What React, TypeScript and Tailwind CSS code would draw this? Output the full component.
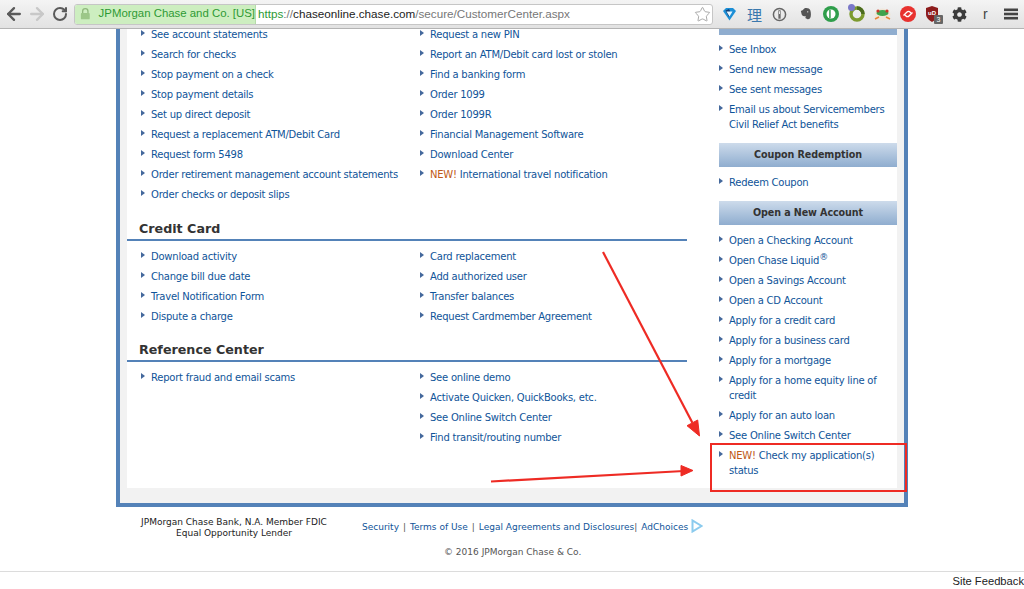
import { ArrowLeft, ArrowRight, RotateCw, Star } from "lucide-react";
import { FaCog } from "react-icons/fa";

type Item = { text: string; isNew?: boolean; sup?: boolean };

const accountLeft = [
  "See account statements",
  "Search for checks",
  "Stop payment on a check",
  "Stop payment details",
  "Set up direct deposit",
  "Request a replacement ATM/Debit Card",
  "Request form 5498",
  "Order retirement management account statements",
  "Order checks or deposit slips",
];
const accountRight: (string | Item)[] = [
  "Request a new PIN",
  "Report an ATM/Debit card lost or stolen",
  "Find a banking form",
  "Order 1099",
  "Order 1099R",
  "Financial Management Software",
  "Download Center",
  { text: "International travel notification", isNew: true },
];
const cardLeft = ["Download activity", "Change bill due date", "Travel Notification Form", "Dispute a charge"];
const cardRight = ["Card replacement", "Add authorized user", "Transfer balances", "Request Cardmember Agreement"];
const refLeft = ["Report fraud and email scams"];
const refRight = [
  "See online demo",
  "Activate Quicken, QuickBooks, etc.",
  "See Online Switch Center",
  "Find transit/routing number",
];
const inbox = ["See Inbox", "Send new message", "See sent messages", "Email us about Servicemembers Civil Relief Act benefits"];
const openAccount: (string | Item)[] = [
  "Open a Checking Account",
  { text: "Open Chase Liquid", sup: true },
  "Open a Savings Account",
  "Open a CD Account",
  "Apply for a credit card",
  "Apply for a business card",
  "Apply for a mortgage",
  "Apply for a home equity line of credit",
  "Apply for an auto loan",
  "See Online Switch Center",
  { text: "Check my application(s) status", isNew: true },
];

function LinkRow({ item }: { item: string | Item }) {
  const data = typeof item === "string" ? { text: item } : item;
  return (
    <li className="flex pb-[5px]">
      <span className="mt-[3px] mr-[6px] h-0 w-0 shrink-0 border-y-[3.5px] border-l-[4px] border-y-transparent border-l-[#44689c]" />
      <a className="text-[10px] leading-[15px] tracking-[-0.23px] text-[#0f5499]">
        {data.isNew ? <span className="text-[#bf5a16]">NEW! </span> : null}
        {data.text}
        {data.sup ? <sup className="text-[9px] leading-[0]">®</sup> : null}
      </a>
    </li>
  );
}

function LinkList({ items, className }: { items: (string | Item)[]; className?: string }) {
  return (
    <ul className={className}>
      {items.map((item) => (
        <LinkRow key={typeof item === "string" ? item : item.text} item={item} />
      ))}
    </ul>
  );
}

function Section({ title, left, right }: { title: string; left: string[]; right: string[] }) {
  return (
    <section>
      <h2 className="pl-3 text-[12.7px] leading-[20px] font-bold text-[#333]">{title}</h2>
      <div className="flex border-t-2 border-[#5482b8] pt-[8px] pl-[14px]">
        <LinkList items={left} className="w-[279px]" />
        <LinkList items={right} className="flex-1" />
      </div>
    </section>
  );
}

function SideHeader({ title }: { title: string }) {
  return (
    <h3 className="h-[24px] bg-gradient-to-b from-[#cddbeb] to-[#8fadcf] text-center text-[9.6px] leading-[24px] font-bold tracking-[-0.1px] text-[#333]">
      {title}
    </h3>
  );
}

function Toolbar() {
  return (
    <header className="relative z-10 flex h-[29px] shrink-0 items-center border-b border-[#b4b4b4] bg-gradient-to-b from-[#f4f4f4] to-[#e2e2e2] pl-[3px]">
      <span className="flex w-[22px] justify-center">
        <ArrowLeft size={20} strokeWidth={2.8} className="text-[#5a5a5a]" />
      </span>
      <span className="ml-[1px] flex w-[22px] justify-center">
        <ArrowRight size={20} strokeWidth={2.8} className="text-[#c8c8c8]" />
      </span>
      <span className="ml-[1px] flex w-[22px] justify-center">
        <RotateCw size={16} strokeWidth={3} className="text-[#5a5a5a]" />
      </span>
      <div className="ml-[3px] flex h-[21px] w-[639px] items-center rounded-[3px] border border-[#c6c6c6] bg-white font-['Liberation_Sans',sans-serif]">
        <div className="flex h-full w-[181px] items-center rounded-l-[2px] border-r border-[#b6dcaa] bg-[#cdeec0] pl-[5px] text-[11.4px] text-[#2d9a34]">
          <svg width="12" height="14" viewBox="0 0 12 14" className="mr-[8px]">
            <path d="M3 6V4a3 3 0 0 1 6 0v2" fill="none" stroke="#8fb87c" strokeWidth="1.5" />
            <rect x="1" y="6" width="10" height="7" rx="1" fill="#9cc788" />
          </svg>
          <span className="whitespace-nowrap">JPMorgan Chase and Co. [US]</span>
        </div>
        <span className="ml-[2px] text-[11.7px] whitespace-nowrap">
          <span className="text-[#2d9a34]">https</span>
          <span className="text-[#777]">://</span>
          <span className="text-[#222]">chaseonline.chase.com</span>
          <span className="text-[#777]">/secure/CustomerCenter.aspx</span>
        </span>
        <Star size={17} strokeWidth={1.2} className="mr-[1px] ml-auto text-[#9a9a9a]" />
      </div>
      <div className="ml-[9px] flex items-center">
        <svg width="15" height="14" viewBox="0 0 15 14">
          <path d="M1 4 4 1h7l3 3-6.5 9.5Z" fill="#1c8fd6" />
          <path d="M3.5 3.5 7 2l1 2-1 6Z" fill="#0f3f78" />
          <path d="M4.5 4.5h6L7.5 9.5Z" fill="#e8f6ff" />
        </svg>
        <span className="ml-[10px] text-[15px] leading-[15px] text-[#3a78ad] font-['Noto_Sans_CJK_SC',sans-serif]">理</span>
        <svg width="15" height="15" viewBox="0 0 16 16" className="ml-[10px]">
          <circle cx="8" cy="8" r="6.5" fill="none" stroke="#666" strokeWidth="1.6" />
          <rect x="6.8" y="3.5" width="2.4" height="9" fill="#666" />
          <rect x="7.6" y="4.5" width="0.9" height="3" fill="#fff" />
        </svg>
        <svg width="12" height="14" viewBox="0 0 14 15" className="ml-[13px]">
          <path d="M3 3 5 1c3-1 6 0 7 2 1 3 1 7 0 9-1 2-3 2-4 1-2 0-2-2-1-3-3 0-4 0-5-2L1 4Z" fill="#555" />
          <circle cx="9" cy="5" r="0.8" fill="#eee" />
        </svg>
        <svg width="16" height="16" viewBox="0 0 16 16" className="ml-[11px]">
          <circle cx="8" cy="8" r="8" fill="#2f9e4b" />
          <circle cx="8" cy="8" r="4.5" fill="#fff" />
          <rect x="6.2" y="4" width="1.5" height="8" fill="#2f9e4b" />
        </svg>
        <span className="relative ml-[10px] h-[16px] w-[16px]">
          <svg width="16" height="16" viewBox="0 0 16 16">
            <circle cx="8" cy="8" r="6" fill="none" stroke="#7c9a2e" strokeWidth="3.4" />
            <path d="M8 2a6 6 0 0 1 6 6" fill="none" stroke="#4b6b1e" strokeWidth="3.4" />
          </svg>
          <span className="absolute -top-[2px] -left-[1px] h-[7px] w-[7px] rounded-full bg-[#7a78c8]" />
        </span>
        <svg width="17" height="13" viewBox="0 0 17 13" className="ml-[9px]">
          <ellipse cx="8.5" cy="6.5" rx="8" ry="6" fill="#efe6d8" />
          <ellipse cx="8.5" cy="5" rx="6" ry="3" fill="#3fa34d" />
          <circle cx="4" cy="3" r="1.6" fill="#c9362c" />
          <circle cx="13" cy="3" r="1.6" fill="#c9362c" />
          <path d="M1 11l4-2M16 11l-4-2" stroke="#e8873a" strokeWidth="1.6" />
        </svg>
        <svg width="16" height="16" viewBox="0 0 16 16" className="ml-[9px]">
          <circle cx="8" cy="8" r="8" fill="#e8322f" />
          <path d="M3.5 9.5 7 6a2 2 0 0 1 3 0l1 1M12.5 6.5 9 10a2 2 0 0 1-3 0L5 9" fill="none" stroke="#fff" strokeWidth="1.3" />
        </svg>
        <span className="relative ml-[9px] h-[16px] w-[16px]">
          <svg width="14" height="16" viewBox="0 0 14 16">
            <path d="M1 2 7 0l6 2v6c0 4-3 6-6 8-3-2-6-4-6-8Z" fill="#8d1c1c" />
            <text x="7" y="9" textAnchor="middle" fontSize="6" fontWeight="700" fill="#fff" fontFamily="Liberation Sans">uD</text>
          </svg>
          <span className="absolute top-[9px] left-[9px] h-[9px] w-[9px] rounded-[1px] bg-[#666] text-center text-[7px] leading-[9px] text-white font-['Liberation_Sans',sans-serif]">3</span>
        </span>
        <FaCog size={15} className="ml-[11px] text-[#3c3c3c]" />
        <span className="ml-[16px] text-[14px] leading-[15px] text-[#444] font-['Liberation_Sans',sans-serif]">r</span>
        <svg width="14" height="12" viewBox="0 0 14 12" className="ml-[16px]">
          <rect width="14" height="2.6" y="0.5" fill="#444" />
          <rect width="14" height="2.6" y="4.7" fill="#444" />
          <rect width="14" height="2.6" y="8.9" fill="#444" />
        </svg>
      </div>
    </header>
  );
}

export default function App() {
  return (
    <div className="relative flex h-[589px] w-[1024px] flex-col overflow-hidden bg-white font-['DejaVu_Sans',Verdana,sans-serif]">
      <Toolbar />
      <div className="ml-[116px] h-[478px] w-[792px] shrink-0 border-x-4 border-b-4 border-[#5482b8] bg-[#f2f2f2] px-[7px]">
        <div className="flex h-[459px] bg-white">
          <div className="-mt-[2px] w-[560px] shrink-0">
            <div className="flex pl-[14px]">
              <LinkList items={accountLeft} className="w-[279px]" />
              <LinkList items={accountRight} className="flex-1" />
            </div>
            <div className="mt-[12px]">
              <Section title="Credit Card" left={cardLeft} right={cardRight} />
            </div>
            <div className="mt-[11px]">
              <Section title="Reference Center" left={refLeft} right={refRight} />
            </div>
          </div>
          <aside className="ml-[32px] flex-1">
            <div className="h-[6px] bg-[#8fadcf]" />
            <LinkList items={inbox} className="mt-[7px] pr-[8px]" />
            <div className="mt-[6px]">
              <SideHeader title="Coupon Redemption" />
            </div>
            <LinkList items={["Redeem Coupon"]} className="mt-[8px]" />
            <div className="mt-[6px]">
              <SideHeader title="Open a New Account" />
            </div>
            <LinkList items={openAccount} className="mt-[8px]" />
          </aside>
        </div>
      </div>
      <footer className="flex h-[39px] shrink-0 pl-[140px]">
        <p className="mt-[10px] w-[188px] text-center text-[9px] leading-[11px] text-[#222]">
          JPMorgan Chase Bank, N.A. Member FDIC
          <br />
          Equal Opportunity Lender
        </p>
        <p className="mt-[14px] ml-[34px] flex h-[14px] items-center text-[9px] whitespace-nowrap text-[#0f5499]">
          Security
          <span className="mx-[4px] text-[#555]">|</span>
          Terms of Use
          <span className="mx-[4px] text-[#555]">|</span>
          Legal Agreements and Disclosures
          <span className="mr-[4px] text-[#555]">|</span>
          AdChoices
          <svg width="12" height="14" viewBox="0 0 12 14" className="mb-[5px] ml-[3px]">
            <path d="M1.5 1.5v11l9-5.5Z" fill="none" stroke="#8ccbee" strokeWidth="2" />
          </svg>
        </p>
      </footer>
      <p className="ml-[444px] shrink-0 text-[9px] leading-[12px] text-[#555]">© 2016 JPMorgan Chase &amp; Co.</p>
      <div className="mt-[13px] flex flex-1 justify-end border-t border-[#dcdcdc]">
        <span className="mt-[2px] text-[11.2px] leading-[14px] text-[#222] font-['Liberation_Sans',sans-serif]">Site Feedback</span>
      </div>
      <div className="absolute top-[443px] left-[710px] h-[49px] w-[197px] border-2 border-[#ee2b24]" />
      <svg width="1024" height="589" viewBox="0 0 1024 589" className="pointer-events-none absolute top-0 left-0">
        <path d="M603 252 692.4 422.8" stroke="#ee2b24" strokeWidth="2.2" />
        <path d="M699.5 436 687 425.7 697.7 420Z" fill="#ee2b24" stroke="#ee2b24" />
        <path d="M491 481.5 684 471" stroke="#ee2b24" strokeWidth="2.2" />
        <path d="M693 470.5 681 465.5 681 476Z" fill="#ee2b24" stroke="#ee2b24" />
      </svg>
    </div>
  );
}
